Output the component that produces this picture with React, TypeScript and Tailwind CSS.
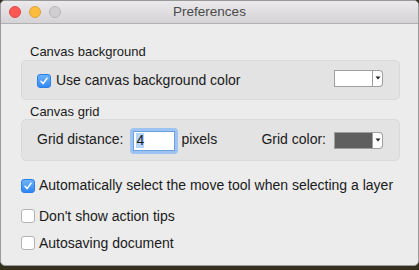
import React from "react";

const font = { fontFamily: '"Liberation Sans", Arial, sans-serif' };

function Check({ checked }: { checked?: boolean }) {
  if (checked) {
    return (
      <div className="w-[14px] h-[14px] rounded-[3px] bg-gradient-to-b from-[#6cb3fa] to-[#2f88f5] border border-[#2a7fe8] flex items-center justify-center shrink-0">
        <svg width="10" height="10" viewBox="0 0 10 10">
          <path d="M2 5.2 L4.1 7.6 L8 2.2" fill="none" stroke="white" strokeWidth="1.5" strokeLinecap="round" strokeLinejoin="round" />
        </svg>
      </div>
    );
  }
  return <div className="w-[14px] h-[14px] rounded-[3px] bg-white border border-[#b3b3b3] shrink-0" />;
}

function ColorWell({ color }: { color: string }) {
  return (
    <div className="flex h-[17px]">
      <div className="w-[39px] h-[17px] border border-[#9f9f9f] p-0" style={{ background: color }} />
      <div className="w-[10px] h-[17px] bg-white border border-l-0 border-[#9f9f9f] rounded-r-[4px] flex items-center justify-center">
        <svg width="6" height="4" viewBox="0 0 6 4">
          <path d="M0.5 0.5 L5.5 0.5 L3 3.5 Z" fill="#222" />
        </svg>
      </div>
    </div>
  );
}

export default function App() {
  return (
    <div className="w-[419px] h-[270px] bg-[#34301f] text-[14px] text-[#1a1a1a]" style={font}>
      <div className="w-[419px] h-[266px] bg-[#ececec] border border-[#9a9a9a] rounded-[5px] overflow-hidden flex flex-col">
        <div className="relative h-[23px] shrink-0 bg-gradient-to-b from-[#ebe9eb] to-[#d5d3d5] border-b border-[#b1b1b1] flex items-center">
          <div className="flex items-center gap-[8px] pl-[8px]">
            <div className="w-[12px] h-[12px] rounded-full bg-[#fc5753] border border-[#df4744]" />
            <div className="w-[12px] h-[12px] rounded-full bg-[#fdbc40] border border-[#dea236]" />
            <div className="w-[12px] h-[12px] rounded-full bg-[#d0ced0] border border-[#b9b7b9]" />
          </div>
          <div className="absolute inset-0 flex items-center justify-center text-[13.5px] text-[#4a4a4a]">Preferences</div>
        </div>
        <div className="pl-[20px] pr-[18px] flex flex-col">
          <div className="mt-[20px] pl-[9px] h-[16px] leading-[16px] text-[13px]">Canvas background</div>
          <div className="h-[40px] rounded-[5px] bg-[#e3e3e3] border border-[#d9d9d9] flex items-center pl-[15px] pr-[16px]">
            <div className="flex items-center gap-[5px] mt-[1px]">
              <Check checked />
              <span>Use canvas background color</span>
            </div>
            <div className="ml-auto -mt-[4px]">
              <ColorWell color="#ffffff" />
            </div>
          </div>
          <div className="mt-[4px] pl-[9px] h-[15px] leading-[15px] text-[13px]">Canvas grid</div>
          <div className="h-[42px] rounded-[5px] bg-[#e3e3e3] border border-[#d9d9d9] flex items-center pl-[15px] pr-[16px]">
            <span className="-mt-[1px]">Grid distance:</span>
            <div className="ml-[7px] w-[48px] h-[26px] rounded-[4px] bg-[#9cc3f2] p-[3px] mt-[1px]">
              <div className="w-full h-full bg-white border border-[#6d9fdc] flex items-center pl-[2px]">
                <span className="bg-[#b4d4fb] leading-[15px]">4</span>
              </div>
            </div>
            <span className="ml-[3px] -mt-[1px]">pixels</span>
            <span className="ml-auto mr-[8px] -mt-[1px]">Grid color:</span>
            <ColorWell color="#5f5f5f" />
          </div>
          <div className="mt-[17px] h-[16px] flex items-center gap-[4px]">
            <Check checked />
            <span className="-mt-[2px]">Automatically select the move tool when selecting a layer</span>
          </div>
          <div className="mt-[14px] h-[16px] flex items-center gap-[4px]">
            <Check />
            <span>Don't show action tips</span>
          </div>
          <div className="mt-[11px] h-[16px] flex items-center gap-[4px]">
            <Check />
            <span>Autosaving document</span>
          </div>
        </div>
      </div>
    </div>
  );
}
